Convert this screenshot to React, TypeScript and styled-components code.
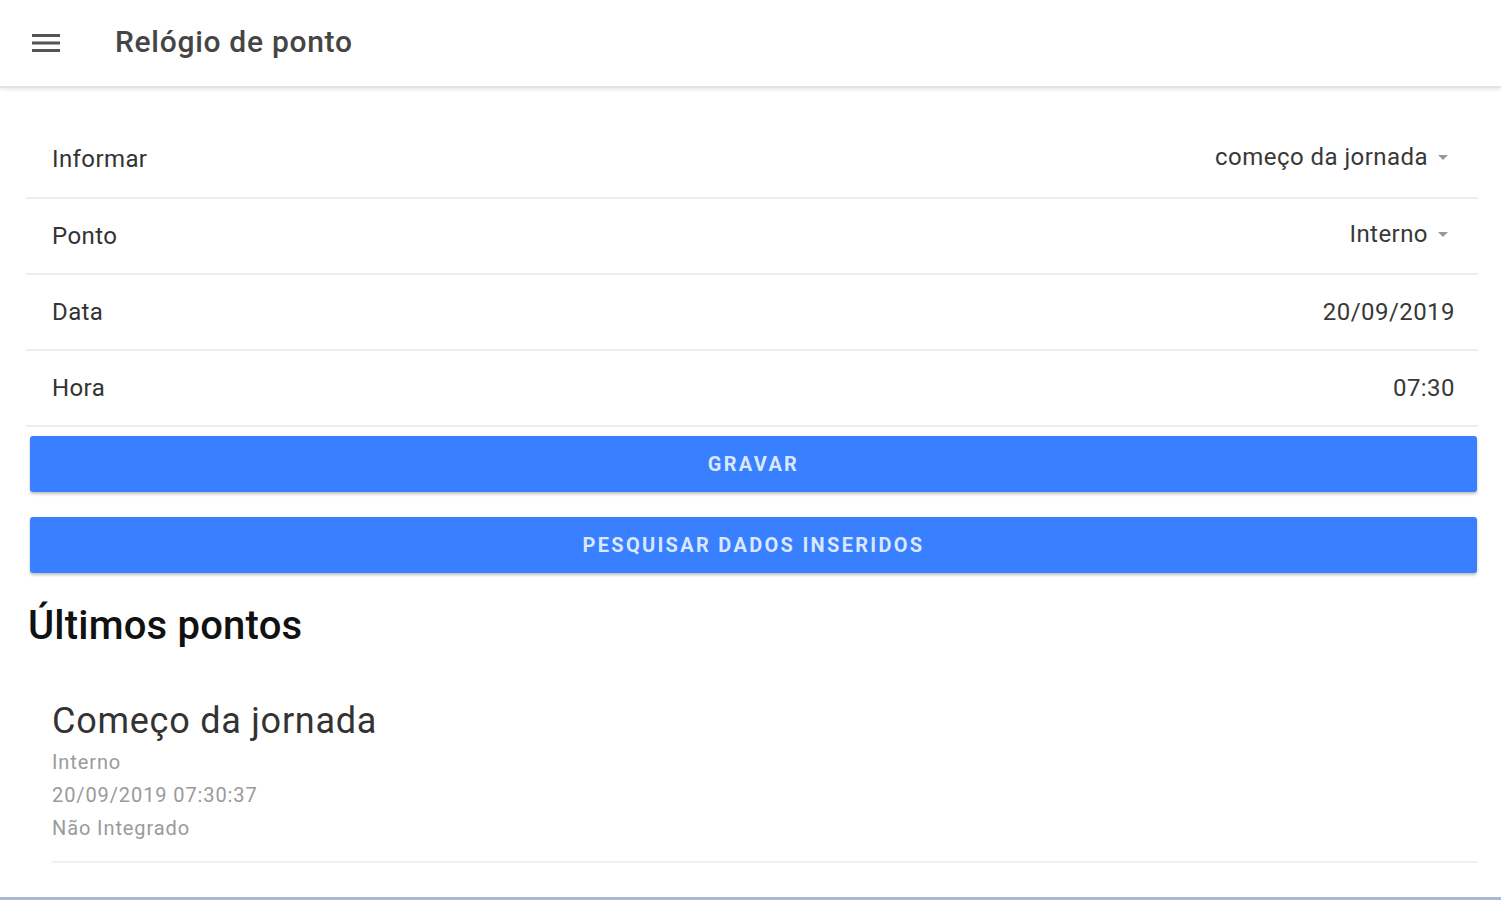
import React from 'react';
import styled, { createGlobalStyle } from 'styled-components';

const GlobalStyle = createGlobalStyle`
  html, body {
    margin: 0;
    padding: 0;
    background: #ffffff;
    font-family: Roboto, "Liberation Sans", Arial, sans-serif;
  }
  * { box-sizing: border-box; }
`;

const Page = styled.div`
  width: 1501px;
  height: 900px;
  overflow: hidden;
  display: flex;
  flex-direction: column;
  border-bottom: 3px solid #a9b8d4;
`;

const Toolbar = styled.header`
  height: 88px;
  display: flex;
  align-items: center;
  padding: 0 0 3px 31px;
  border-bottom: 2px solid #e2e2e2;
  box-shadow: 0 2px 3px rgba(0, 0, 0, 0.08);
  flex-shrink: 0;
`;

const MenuButton = styled.button`
  width: 30px;
  height: 30px;
  padding: 0;
  border: none;
  background: none;
  display: flex;
  align-items: center;
  justify-content: center;
  margin: 3px 54px 0 0;
  color: #555;
`;

const Title = styled.h1`
  margin: 0;
  font-size: 30px;
  font-weight: 500;
  color: #454545;
  letter-spacing: 0.7px;
`;

const Content = styled.main`
  flex: 1;
  display: flex;
  flex-direction: column;
  padding: 33px 23px 0 26px;
`;

const List = styled.div`
  display: flex;
  flex-direction: column;
`;

const Row = styled.div<{ $first?: boolean }>`
  height: ${({ $first }) => ($first ? '78px' : '76px')};
  display: flex;
  align-items: center;
  justify-content: space-between;
  padding: 0 23px 0 26px;
  border-bottom: 2px solid #eeeeee;
`;

const Label = styled.span`
  font-size: 24px;
  letter-spacing: 0.4px;
  color: #333;
`;

const Value = styled.span<{ $select?: boolean }>`
  display: flex;
  align-items: center;
  font-size: 24px;
  letter-spacing: 0.45px;
  color: #383838;
  margin-top: ${({ $select }) => ($select ? '-4px' : '0')};
  margin-right: ${({ $select }) => ($select ? '7px' : '0')};
`;

const Caret = styled.span`
  width: 0;
  height: 0;
  margin-left: 10px;
  border-left: 5px solid transparent;
  border-right: 5px solid transparent;
  border-top: 5px solid #999;
`;

const Buttons = styled.div`
  display: flex;
  flex-direction: column;
  gap: 25px;
  margin-top: 9px;
  padding: 0 1px 0 4px;
`;

const PrimaryButton = styled.button`
  height: 56px;
  border: none;
  border-radius: 3px;
  background: #3880ff;
  color: rgba(255, 255, 255, 0.82);
  font-family: Roboto, "Liberation Sans", Arial, sans-serif;
  font-size: 20px;
  font-weight: 700;
  letter-spacing: 2.3px;
  text-transform: uppercase;
  box-shadow: 0 2px 3px rgba(0, 0, 0, 0.25);
`;

const SectionTitle = styled.h2`
  margin: 27px 0 0 2px;
  font-size: 40px;
  font-weight: 500;
  letter-spacing: 0.2px;
  color: #111;
  line-height: 52px;
`;

const Entry = styled.div`
  margin: 45px 0 0 26px;
  padding-bottom: 16px;
  border-bottom: 2px solid #f0f0f0;
  display: flex;
  flex-direction: column;
`;

const EntryTitle = styled.div`
  font-size: 36px;
  letter-spacing: 0.75px;
  color: #333;
  line-height: 48px;
  margin-bottom: 1px;
`;

const EntryLine = styled.div`
  font-size: 20px;
  letter-spacing: 0.9px;
  color: #9a9a9a;
  line-height: 33px;
`;

const fields = [
  { label: 'Informar', value: 'começo da jornada', select: true },
  { label: 'Ponto', value: 'Interno', select: true },
  { label: 'Data', value: '20/09/2019', select: false },
  { label: 'Hora', value: '07:30', select: false },
];

export default function App() {
  return (
    <>
      <GlobalStyle />
      <Page>
        <Toolbar>
          <MenuButton aria-label="menu">
            <svg width="28" height="20" viewBox="0 0 28 20">
              <rect x="0" y="1" width="28" height="3" fill="#555" />
              <rect x="0" y="8.5" width="28" height="3" fill="#555" />
              <rect x="0" y="16" width="28" height="3" fill="#555" />
            </svg>
          </MenuButton>
          <Title>Relógio de ponto</Title>
        </Toolbar>
        <Content>
          <List>
            {fields.map((f, i) => (
              <Row key={f.label} $first={i === 0}>
                <Label>{f.label}</Label>
                <Value $select={f.select}>
                  {f.value}
                  {f.select && <Caret />}
                </Value>
              </Row>
            ))}
          </List>
          <Buttons>
            <PrimaryButton>Gravar</PrimaryButton>
            <PrimaryButton>Pesquisar dados inseridos</PrimaryButton>
          </Buttons>
          <SectionTitle>Últimos pontos</SectionTitle>
          <Entry>
            <EntryTitle>Começo da jornada</EntryTitle>
            <EntryLine>Interno</EntryLine>
            <EntryLine>20/09/2019 07:30:37</EntryLine>
            <EntryLine>Não Integrado</EntryLine>
          </Entry>
        </Content>
      </Page>
    </>
  );
}
